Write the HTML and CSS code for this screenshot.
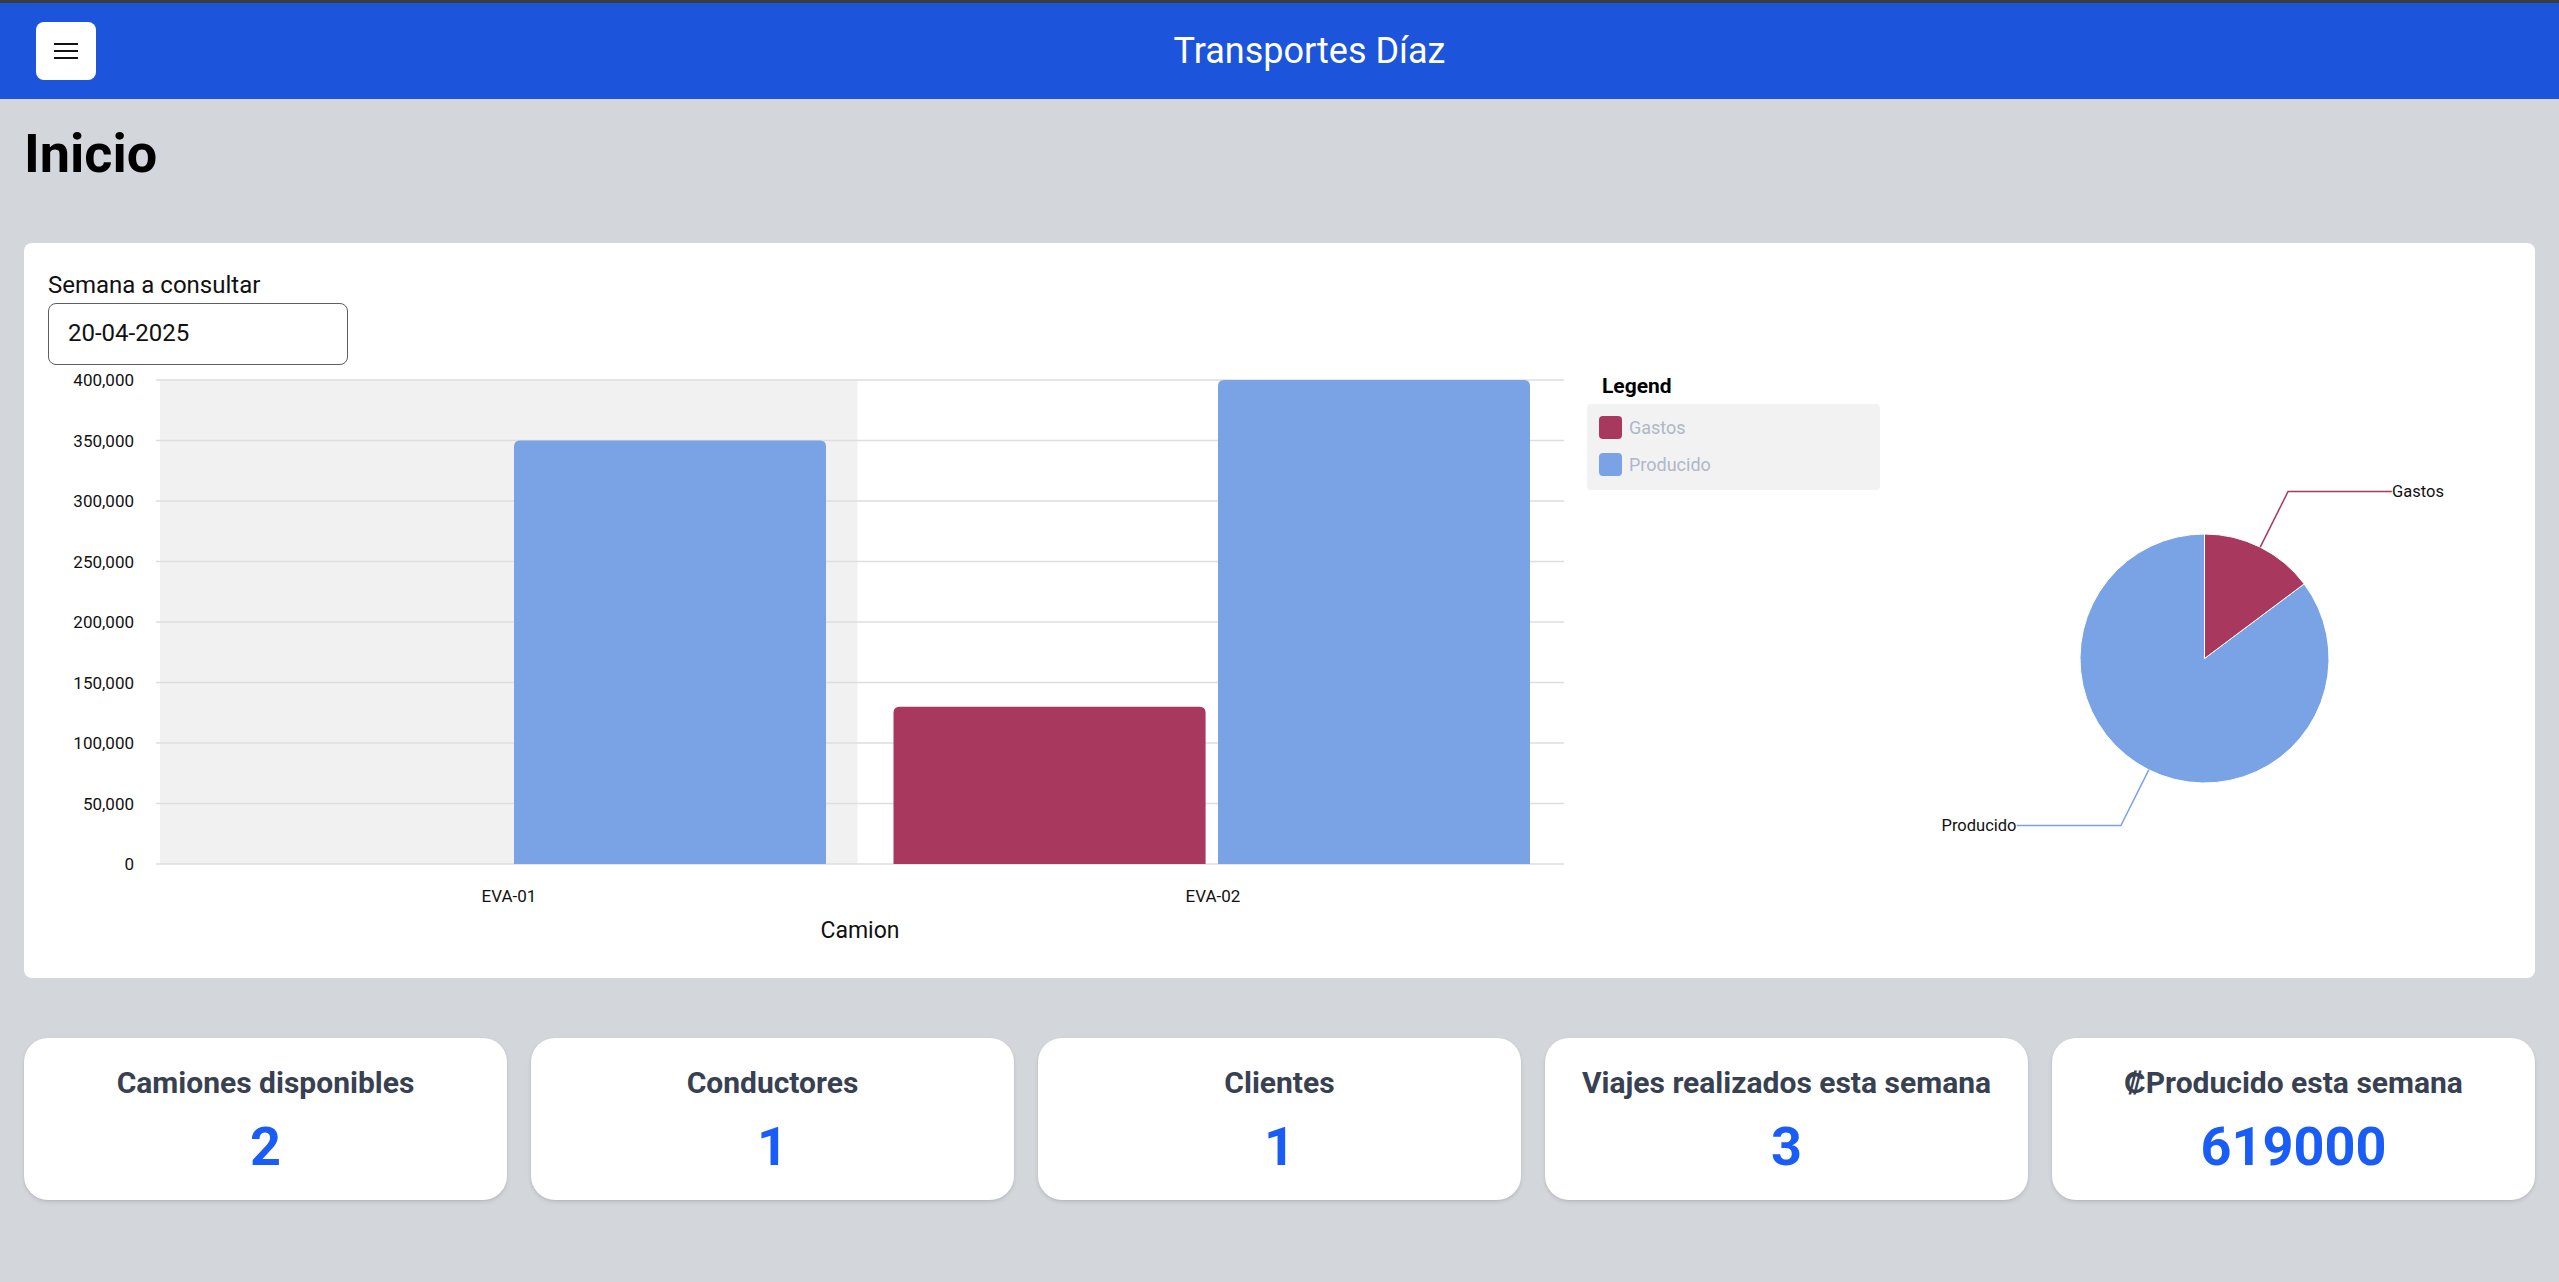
FILE: index.html
```html
<!DOCTYPE html>
<html lang="es">
<head>
<meta charset="utf-8">
<title>Transportes Díaz</title>
<link rel="stylesheet" href="styles.css">
</head>
<body>
<header class="topbar">
  <button class="menu-btn" aria-label="Menú">
    <svg width="24" height="18" viewBox="0 0 24 18"><g fill="#111"><rect x="0" y="1" width="24" height="2"/><rect x="0" y="8" width="24" height="2"/><rect x="0" y="15" width="24" height="2"/></g></svg>
  </button>
  <div class="brand">Transportes Díaz</div>
</header>

<main class="page">
  <h1 class="page-title">Inicio</h1>

  <section class="chart-card">
    <label class="field-label" for="semana">Semana a consultar</label>
    <div class="date-input" id="semana">20-04-2025</div>

    <div class="chart-row">
      <svg class="bar-chart" width="1539" height="589" viewBox="0 0 1539 589">
        <rect x="112" y="15" width="697.5" height="484" fill="#f1f1f1"/>
        <g stroke="#dedede" stroke-width="1.5">
          <line x1="108" x2="1516" y1="15" y2="15"/>
          <line x1="108" x2="1516" y1="75.5" y2="75.5"/>
          <line x1="108" x2="1516" y1="136" y2="136"/>
          <line x1="108" x2="1516" y1="196.5" y2="196.5"/>
          <line x1="108" x2="1516" y1="257" y2="257"/>
          <line x1="108" x2="1516" y1="317.5" y2="317.5"/>
          <line x1="108" x2="1516" y1="378" y2="378"/>
          <line x1="108" x2="1516" y1="438.5" y2="438.5"/>
          <line x1="108" x2="1516" y1="499" y2="499"/>
        </g>
        <g class="tick" text-anchor="end">
          <text x="86" y="15">400,000</text>
          <text x="86" y="75.5">350,000</text>
          <text x="86" y="136">300,000</text>
          <text x="86" y="196.5">250,000</text>
          <text x="86" y="257">200,000</text>
          <text x="86" y="317.5">150,000</text>
          <text x="86" y="378">100,000</text>
          <text x="86" y="438.5">50,000</text>
          <text x="86" y="499">0</text>
        </g>
        <path d="M466 499 V81.5 Q466 75.5 472 75.5 H772 Q778 75.5 778 81.5 V499 Z" fill="#7aa3e5"/>
        <path d="M845.5 499 V347.7 Q845.5 341.7 851.5 341.7 H1151.6 Q1157.6 341.7 1157.6 347.7 V499 Z" fill="#a8385d"/>
        <path d="M1170 499 V21 Q1170 15 1176 15 H1476 Q1482 15 1482 21 V499 Z" fill="#7aa3e5"/>
        <g class="tick" text-anchor="middle">
          <text x="461" y="531">EVA-01</text>
          <text x="1165" y="531">EVA-02</text>
        </g>
        <text class="axis-label" x="812" y="565" text-anchor="middle">Camion</text>
      </svg>

      <div class="legend">
        <div class="legend-title">Legend</div>
        <ul class="legend-box">
          <li class="legend-item"><span class="swatch swatch-gastos"></span>Gastos</li>
          <li class="legend-item"><span class="swatch swatch-producido"></span>Producido</li>
        </ul>
      </div>

      <svg class="pie-chart" width="631" height="589" viewBox="0 0 631 589">
        <path d="M324.5 293.5 L424.18 218.9 A124.5 124.5 0 1 1 324.5 169 Z" fill="#7aa3e5" stroke="#fff" stroke-width="1"/>
        <path d="M324.5 293.5 L324.5 169 A124.5 124.5 0 0 1 424.18 218.9 Z" fill="#a8385d" stroke="#fff" stroke-width="1"/>
        <polyline points="380.23,182.16 408.09,126.5 511.8,126.5" fill="none" stroke="#a8385d" stroke-width="1.5"/>
        <polyline points="268.77,404.84 240.91,460.5 136.7,460.5" fill="none" stroke="#7aa3e5" stroke-width="1.5"/>
        <text class="pie-label" x="512" y="126.5">Gastos</text>
        <text class="pie-label" x="136.5" y="460.5" text-anchor="end">Producido</text>
      </svg>
    </div>
  </section>

  <section class="stats">
    <div class="stat-card"><div class="stat-title">Camiones disponibles</div><div class="stat-value">2</div></div>
    <div class="stat-card"><div class="stat-title">Conductores</div><div class="stat-value">1</div></div>
    <div class="stat-card"><div class="stat-title">Clientes</div><div class="stat-value">1</div></div>
    <div class="stat-card"><div class="stat-title">Viajes realizados esta semana</div><div class="stat-value">3</div></div>
    <div class="stat-card"><div class="stat-title">₡Producido esta semana</div><div class="stat-value">619000</div></div>
  </section>
</main>
</body>
</html>
```

FILE: styles.css
```css
* { box-sizing: border-box; }

html, body {
  margin: 0;
  padding: 0;
}

body {
  background: #d3d6db;
  font-family: Roboto, "Liberation Sans", Arial, sans-serif;
  color: #000;
  min-height: 1282px;
}

.topbar {
  height: 99px;
  border-top: 3px solid #3c3c3c;
  background: #1c54db;
  display: flex;
  align-items: center;
  padding: 0 36px;
}

.menu-btn {
  width: 60px;
  height: 58px;
  border: none;
  border-radius: 8px;
  background: #fff;
  display: flex;
  align-items: center;
  justify-content: center;
  padding: 0;
  flex: none;
}

.menu-btn svg { display: block; }

.brand {
  flex: 1;
  text-align: center;
  color: #fff;
  font-size: 36px;
  line-height: 42px;
}

.page {
  padding: 21.5px 24px 24px;
}

.page-title {
  margin: 0 0 56.5px;
  font-size: 54px;
  line-height: 66px;
  font-weight: 700;
  color: #000;
}

.chart-card {
  background: #fff;
  border-radius: 8px;
  padding: 24px;
  height: 735px;
}

.field-label {
  display: block;
  font-size: 24px;
  line-height: 36px;
  color: #111;
}

.date-input {
  width: 300px;
  height: 62px;
  border: 1.5px solid #5f5f5f;
  border-radius: 8px;
  font-size: 24px;
  line-height: 59px;
  padding-left: 19px;
  color: #111;
}

.chart-row {
  display: flex;
  align-items: flex-start;
}

.bar-chart, .pie-chart {
  display: block;
  flex: none;
  font-family: Roboto, "Liberation Sans", Arial, sans-serif;
}

.tick {
  font-size: 17px;
  fill: #111;
  dominant-baseline: central;
}

.axis-label {
  font-size: 23px;
  fill: #111;
  dominant-baseline: central;
}

.pie-label {
  font-size: 16.5px;
  fill: #111;
  dominant-baseline: central;
}

.legend {
  width: 293px;
  flex: none;
  padding-top: 5.5px;
}

.legend-title {
  font-size: 21px;
  line-height: 30px;
  font-weight: 700;
  padding-left: 15px;
  margin-bottom: 3.5px;
}

.legend-box {
  list-style: none;
  margin: 0;
  background: #f2f2f2;
  border-radius: 4px;
  padding: 12px 12px 14px;
  display: flex;
  flex-direction: column;
  gap: 14px;
}

.legend-item {
  display: flex;
  align-items: center;
  gap: 7px;
  font-size: 18px;
  line-height: 23px;
  color: #afb7c8;
}

.swatch {
  width: 23px;
  height: 23px;
  border-radius: 4px;
  flex: none;
}

.swatch-gastos { background: #a8385d; }
.swatch-producido { background: #7aa3e5; }

.stats {
  margin-top: 60px;
  display: grid;
  grid-template-columns: repeat(5, 1fr);
  gap: 24px;
}

.stat-card {
  background: #fff;
  border-radius: 24px;
  height: 162px;
  padding-top: 24px;
  text-align: center;
  box-shadow: 0 2px 4px rgba(0, 0, 0, 0.1), 0 1px 2px rgba(0, 0, 0, 0.06);
}

.stat-title {
  font-size: 30px;
  line-height: 42px;
  font-weight: 700;
  color: #374151;
}

.stat-value {
  margin-top: 16px;
  font-size: 54px;
  line-height: 54px;
  font-weight: 700;
  color: #1a5cf6;
}
```
